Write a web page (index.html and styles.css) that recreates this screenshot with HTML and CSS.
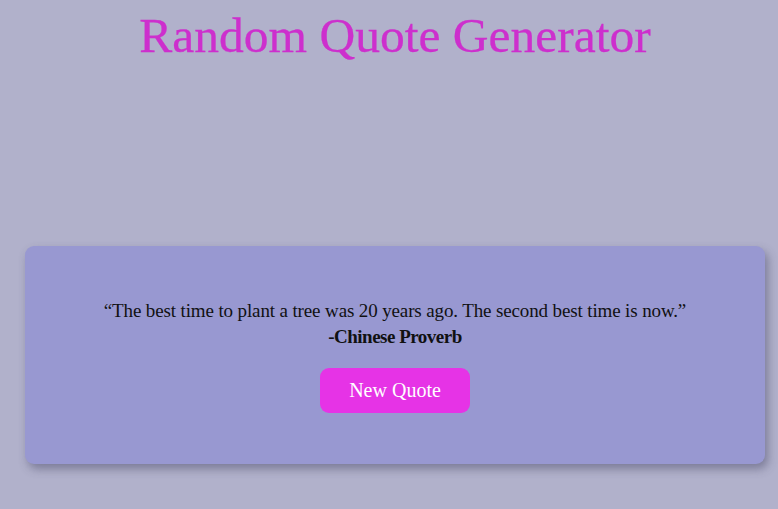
FILE: index.html
```html
<!DOCTYPE html>
<html lang="en">
<head>
<meta charset="utf-8">
<title>Random Quote Generator</title>
<link rel="stylesheet" href="styles.css">
</head>
<body>
<div class="page">
  <h1 class="title">Random Quote Generator</h1>
  <main class="card">
    <p class="quote">“The best time to plant a tree was 20 years ago. The second best time is now.”</p>
    <p class="author">-Chinese Proverb</p>
    <button class="btn">New Quote</button>
  </main>
</div>
</body>
</html>
```
FILE: styles.css
```css
html, body {
  margin: 0;
  padding: 0;
}
body {
  background: #b1b1cb;
  font-family: "Liberation Serif", "Times New Roman", serif;
  color: #111;
  width: 778px;
  height: 509px;
  overflow: hidden;
}
.page {
  margin: 0 13px 0 25px;
}
.title {
  margin: 0;
  padding-top: 9px;
  text-align: center;
  color: #cd2fcd;
  font-weight: normal;
  font-size: 49.5px;
  line-height: 53px;
  letter-spacing: 0;
  -webkit-text-stroke: 0.3px #cd2fcd;
  white-space: nowrap;
}
.card {
  margin-top: 184px;
  height: 218px;
  box-sizing: border-box;
  background: #9898d1;
  border-radius: 9px;
  box-shadow: 3px 5px 10px rgba(60, 60, 90, 0.45);
  display: flex;
  flex-direction: column;
  align-items: center;
  padding-top: 52px;
}
.quote {
  margin: 0;
  font-size: 19px;
  line-height: 26px;
  letter-spacing: -0.13px;
  text-align: center;
}
.author {
  margin: 0;
  font-size: 19px;
  line-height: 26px;
  font-weight: bold;
  letter-spacing: -0.5px;
}
.btn {
  margin-top: 18px;
  width: 150px;
  height: 45px;
  border: none;
  border-radius: 9px;
  background: #e633e6;
  color: #fff;
  font-family: "Liberation Serif", "Times New Roman", serif;
  font-size: 20px;
  cursor: pointer;
}
```
